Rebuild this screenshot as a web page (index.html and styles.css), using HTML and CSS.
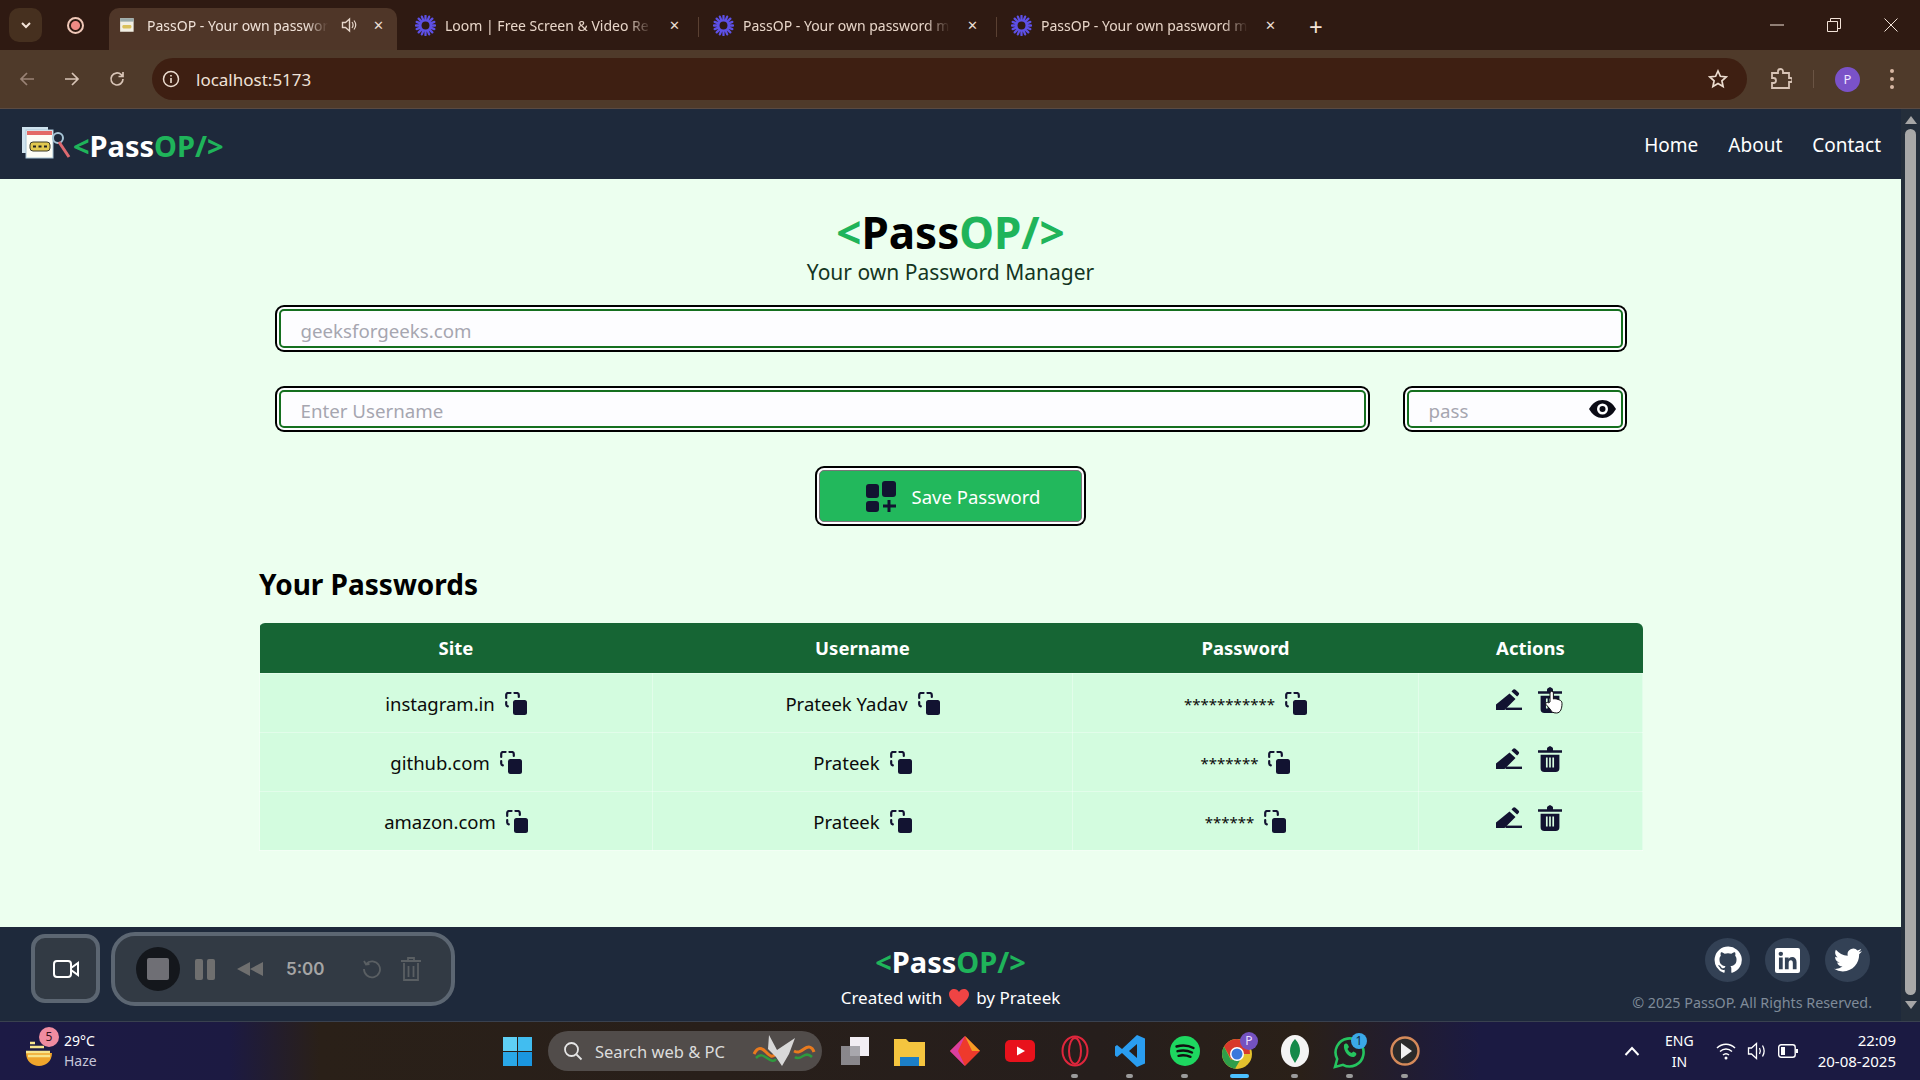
FILE: index.html
```html
<!DOCTYPE html>
<html lang="en">
<head>
    <meta charset="UTF-8">
    <title>PassOP - Your own password manager</title>
    <link rel="stylesheet" href="styles.css">
</head>
<body>
    <svg class="defs" width="0" height="0">
        <symbol id="i-spark" viewBox="0 0 24 24">
            <g stroke="#5d50e6" stroke-width="2.6" stroke-linecap="round">
                <path d="M12 1v22M1 12h22M4.2 4.2l15.6 15.6M19.8 4.2L4.2 19.8M7.8 1.9l8.4 20.2M16.2 1.9L7.8 22.1M1.9 7.8l20.2 8.4M22.1 7.8L1.9 16.2"/>
            </g>
            <circle cx="12" cy="12" r="4.5" fill="#2f1a12"/>
        </symbol>
        <symbol id="i-copy" viewBox="0 0 22 23">
            <rect x="8" y="8" width="14" height="15" rx="2.5" fill="#121331"/>
            <path d="M1.2 6V3a2 2 0 0 1 2-2h2.3M9.5 1h2.3a2 2 0 0 1 2 2v2M1.2 10v2.5a2 2 0 0 0 1.6 1.9" fill="none" stroke="#121331" stroke-width="2.2" stroke-linecap="round"/>
        </symbol>
        <symbol id="i-edit" viewBox="0 0 26 21">
            <path d="M13.500 4.500l6 5.500L8.500 21H0v-5.500zM15.500 2.500l1.500-1.700a1.800 1.800 0 0 1 2.500-.1l3 2.700a1.800 1.800 0 0 1 .1 2.500l-1.500 1.700z" fill="#121331"/>
            <rect x="9.500" y="18.600" width="16.500" height="2.400" fill="#121331"/>
        </symbol>
        <symbol id="i-trash" viewBox="0 0 24 26">
            <path d="M0 4.2h24v2.600H0zM9 4.200V2.600C9 1.600 10 1 12 0c2 1 3 1.600 3 2.600v1.600z" fill="#121331"/>
            <path d="M2.600 8.800h18.800v13.400a3.800 3.800 0 0 1-3.800 3.800H6.400a3.800 3.800 0 0 1-3.800-3.800z" fill="#121331"/>
            <path d="M8.800 11.500v10M12 11.500v10M15.200 11.500v10" stroke="#d6fbdf" stroke-width="1.700"/>
        </symbol>
    </svg>

    <div class="tabstrip">
        <div class="tab-menu">
            <svg width="14" height="14" viewBox="0 0 14 14"><path d="M3 5l4 4 4-4" fill="none" stroke="#f3e3d8" stroke-width="2"/></svg>
        </div>
        <div class="rec-dot"></div>
        <div class="tab tab-active">
            <svg class="tab-icon" viewBox="0 0 16 16"><rect x="1" y="2" width="12" height="12" fill="#f2efe4"/><rect x="1" y="2" width="12" height="3" fill="#9aa"/><rect x="3" y="8" width="8" height="3" rx="1" fill="#d9c05c"/></svg>
            <span class="tab-title">PassOP - Your own passwor</span>
            <svg class="tab-sound" width="16" height="16" viewBox="0 0 16 16"><path d="M1.500 5.500h3l4-3.500v12l-4-3.500h-3z" fill="none" stroke="#e6d6ca" stroke-width="1.400"/><path d="M11 5c1.300 1.800 1.300 4.200 0 6M13 3.500c2 2.600 2 6.400 0 9" fill="none" stroke="#e6d6ca" stroke-width="1.200"/></svg>
            <span class="tab-close">✕</span>
        </div>
        <div class="tab">
            <svg class="tab-icon spark"><use href="#i-spark"/></svg>
            <span class="tab-title">Loom | Free Screen &amp; Video Re</span>
            <span class="tab-close">✕</span>
        </div>
        <div class="tab tab-sep">
            <svg class="tab-icon spark"><use href="#i-spark"/></svg>
            <span class="tab-title">PassOP - Your own password m</span>
            <span class="tab-close">✕</span>
        </div>
        <div class="tab tab-sep">
            <svg class="tab-icon spark"><use href="#i-spark"/></svg>
            <span class="tab-title">PassOP - Your own password m</span>
            <span class="tab-close">✕</span>
        </div>
        <div class="tab-new">+</div>
        <div class="win-controls">
            <svg width="14" height="14" viewBox="0 0 14 14"><path d="M0 7h14" stroke="#f3e3d8"/></svg>
            <svg width="14" height="14" viewBox="0 0 14 14"><path d="M.5 3.500h10v10H.500zM3.500 3.500V.5h10v10h-3" fill="none" stroke="#f3e3d8"/></svg>
            <svg width="14" height="14" viewBox="0 0 14 14"><path d="M.5.5l13 13M13.500.5l-13 13" stroke="#f3e3d8"/></svg>
        </div>
    </div>

    <div class="toolbar">
        <svg class="tool-btn" width="18" height="18" viewBox="0 0 18 18"><path d="M16 9H3M9 3L3 9l6 6" fill="none" stroke="#9a8376" stroke-width="1.700"/></svg>
        <svg class="tool-btn" width="18" height="18" viewBox="0 0 18 18"><path d="M2 9h13M9 3l6 6-6 6" fill="none" stroke="#d8c4b6" stroke-width="1.700"/></svg>
        <svg class="tool-btn" width="18" height="18" viewBox="0 0 18 18"><path d="M15 9a6 6 0 1 1-1.800-4.300L15 6.500M15 2v4.500h-4.500" fill="none" stroke="#d8c4b6" stroke-width="1.700"/></svg>
        <div class="addressbar">
            <svg width="18" height="18" viewBox="0 0 18 18"><circle cx="9" cy="9" r="7.500" fill="none" stroke="#ecdccf" stroke-width="1.500"/><path d="M9 8v5M9 5v1.500" stroke="#ecdccf" stroke-width="1.600"/></svg>
            <span class="url">localhost:5173</span>
            <svg class="star" width="20" height="20" viewBox="0 0 20 20"><path d="M10 2l2.400 5.300 5.800.6-4.300 3.900 1.200 5.700-5.100-2.900-5.100 2.900 1.200-5.700L1.800 7.900l5.800-.6z" fill="none" stroke="#ecdccf" stroke-width="1.700"/></svg>
        </div>
        <svg class="puzzle" width="22" height="22" viewBox="0 0 22 22"><path d="M2 5h6V3.500a2.500 2.500 0 0 1 5 0V5h6v5h1.500a2 2 0 0 1 0 4H19v6H2v-5h1.500a2.500 2.500 0 0 0 0-5H2z" fill="none" stroke="#d8c4b6" stroke-width="1.800"/></svg>
        <span class="tool-sep"></span>
        <div class="avatar">P</div>
        <div class="kebab"><i></i><i></i><i></i></div>
    </div>

    <div class="viewport">
        <div class="page">
            <nav class="navbar">
                <div class="nav-brand">
                    <svg class="nav-icon" width="50" height="32" viewBox="0 0 50 32">
                        <rect x="0" y="0" width="26" height="26" fill="#cfe2ee"/>
                        <rect x="4" y="3" width="27" height="28" fill="#fdfdf6" stroke="#a7c4d6"/>
                        <rect x="5" y="4" width="25" height="4" fill="#e36a66"/>
                        <rect x="8" y="15" width="20" height="9" rx="3" fill="#e2c84f" stroke="#3a3a2a"/>
                        <path d="M11 19.500h3M16.500 19.500h3M22 19.500h3" stroke="#222" stroke-width="2"/>
                        <circle cx="36" cy="11" r="5" fill="none" stroke="#a7c4d6" stroke-width="2"/>
                        <path d="M37 15l10 15" stroke="#dd6a70" stroke-width="3"/>
                    </svg>
                    <div class="logo logo-light"><span class="logo-green">&lt;</span>Pass<span class="logo-green">OP/&gt;</span></div>
                </div>
                <ul class="nav-links">
                    <li>Home</li>
                    <li>About</li>
                    <li>Contact</li>
                </ul>
            </nav>

            <main class="content">
                <h1 class="hero-title logo"><span class="logo-green">&lt;</span>Pass<span class="logo-green">OP/&gt;</span></h1>
                <p class="hero-sub">Your own Password Manager</p>

                <div class="form">
                    <input class="field" type="text" placeholder="geeksforgeeks.com">
                    <div class="form-row">
                        <input class="field field-user" type="text" placeholder="Enter Username">
                        <div class="pass-wrap">
                            <input class="field field-pass" type="text" placeholder="pass">
                            <svg class="eye" width="27" height="18" viewBox="0 0 27 18">
                                <path d="M0 9C3.500 3 8 0 13.500 0S23.500 3 27 9c-3.500 6-8 9-13.500 9S3.500 15 0 9z" fill="#0a0a14"/>
                                <circle cx="13.500" cy="9" r="5.500" fill="#fff"/>
                                <circle cx="13.500" cy="9" r="3" fill="#0a0a14"/>
                            </svg>
                        </div>
                    </div>
                    <button class="save-btn">
                        <svg width="31" height="31" viewBox="0 0 31 31">
                            <rect x="0" y="3" width="13" height="14" rx="3" fill="#121331"/>
                            <rect x="16" y="0" width="14" height="16" rx="3" fill="#121331"/>
                            <rect x="0" y="20" width="13" height="11" rx="3" fill="#121331"/>
                            <path d="M23 19v12M17 25h13" stroke="#121331" stroke-width="3"/>
                        </svg>
                        Save Password
                    </button>
                </div>

                <div class="passwords">
                    <h2 class="passwords-title">Your Passwords</h2>
                    <table class="pw-table">
                        <colgroup>
                            <col class="col-site"><col class="col-user"><col class="col-pass"><col class="col-actions">
                        </colgroup>
                        <thead>
                            <tr><th>Site</th><th>Username</th><th>Password</th><th>Actions</th></tr>
                        </thead>
                        <tbody>
                            <tr>
                                <td><div class="cell">instagram.in <svg class="copy"><use href="#i-copy"/></svg></div></td>
                                <td><div class="cell">Prateek Yadav <svg class="copy"><use href="#i-copy"/></svg></div></td>
                                <td><div class="cell cell-stars">*********** <svg class="copy"><use href="#i-copy"/></svg></div></td>
                                <td>
                                    <div class="cell-actions">
                                        <svg class="edit"><use href="#i-edit"/></svg>
                                        <svg class="trash"><use href="#i-trash"/></svg>
                                        <svg class="hand" width="19" height="24" viewBox="0 0 19 24">
                                            <path d="M5 12V3a1.700 1.700 0 0 1 3.400 0v6l1.500-.3 1.600.3 1.500.4 1.500.6c1.500.5 2.500 1.500 2.500 3.500 0 5-1.500 9.500-5.500 9.500-3.500 0-5-1-6.500-4L1 14.500c-.8-1.500 1-3 2.300-1.700z" fill="#fff" stroke="#111" stroke-width="1"/>
                                        </svg>
                                    </div>
                                </td>
                            </tr>
                            <tr>
                                <td><div class="cell">github.com <svg class="copy"><use href="#i-copy"/></svg></div></td>
                                <td><div class="cell">Prateek <svg class="copy"><use href="#i-copy"/></svg></div></td>
                                <td><div class="cell cell-stars">******* <svg class="copy"><use href="#i-copy"/></svg></div></td>
                                <td>
                                    <div class="cell-actions">
                                        <svg class="edit"><use href="#i-edit"/></svg>
                                        <svg class="trash"><use href="#i-trash"/></svg>
                                    </div>
                                </td>
                            </tr>
                            <tr>
                                <td><div class="cell">amazon.com <svg class="copy"><use href="#i-copy"/></svg></div></td>
                                <td><div class="cell">Prateek <svg class="copy"><use href="#i-copy"/></svg></div></td>
                                <td><div class="cell cell-stars">****** <svg class="copy"><use href="#i-copy"/></svg></div></td>
                                <td>
                                    <div class="cell-actions">
                                        <svg class="edit"><use href="#i-edit"/></svg>
                                        <svg class="trash"><use href="#i-trash"/></svg>
                                    </div>
                                </td>
                            </tr>
                        </tbody>
                    </table>
                </div>
            </main>

            <footer class="footer">
                <div></div>
                <div class="footer-center">
                    <div class="logo logo-light"><span class="logo-green">&lt;</span>Pass<span class="logo-green">OP/&gt;</span></div>
                    <div class="created">Created with
                        <svg width="20" height="18" viewBox="0 0 20 18"><path d="M10 18C4 13 0 9.500 0 5.300 0 2 2.500 0 5.200 0 7.200 0 9 1 10 3c1-2 2.800-3 4.800-3C17.500 0 20 2 20 5.300 20 9.500 16 13 10 18z" fill="#ef4444"/></svg>
                        by Prateek</div>
                </div>
                <div class="footer-right">
                    <div class="socials">
                        <div class="social">
                            <svg width="28" height="28" viewBox="0 0 24 24"><path fill="#fff" d="M12 .5a11.500 11.500 0 0 0-3.640 22.410c.57.1.79-.25.79-.55v-2.030c-3.200.7-3.880-1.370-3.880-1.370-.52-1.330-1.280-1.690-1.280-1.690-1.050-.71.080-.7.080-.7 1.160.08 1.770 1.190 1.770 1.190 1.030 1.760 2.700 1.250 3.360.96.100-.75.400-1.250.73-1.540-2.550-.29-5.240-1.280-5.240-5.680 0-1.250.45-2.280 1.180-3.080-.12-.29-.51-1.460.11-3.040 0 0 .96-.31 3.150 1.180a10.900 10.900 0 0 1 5.740 0c2.190-1.490 3.150-1.180 3.150-1.180.62 1.580.23 2.750.11 3.040.73.8 1.180 1.830 1.180 3.080 0 4.410-2.690 5.380-5.250 5.670.41.360.78 1.060.78 2.130v3.160c0 .3.210.66.790.55A11.500 11.500 0 0 0 12 .5z"/></svg>
                        </div>
                        <div class="social">
                            <svg width="25" height="25" viewBox="0 0 24 24"><path fill="#fff" d="M2 0h20a2 2 0 0 1 2 2v20a2 2 0 0 1-2 2H2a2 2 0 0 1-2-2V2a2 2 0 0 1 2-2zm1.800 9v11.500h3.600V9zm1.800-5.500a2.100 2.100 0 1 0 0 4.200 2.100 2.100 0 0 0 0-4.200zM9.500 9v11.500h3.600v-6c0-1.600.6-2.800 2.100-2.800s1.900 1.100 1.900 2.800v6h3.600v-6.800c0-3.100-1.600-5-4.300-5-1.600 0-2.700.8-3.300 1.800V9z"/></svg>
                        </div>
                        <div class="social">
                            <svg width="28" height="28" viewBox="0 0 24 24"><path fill="#fff" d="M23.950 4.570a10 10 0 0 1-2.820.77 4.960 4.960 0 0 0 2.160-2.720c-.95.550-2 .96-3.130 1.180a4.920 4.920 0 0 0-8.380 4.480C7.690 8.100 4.070 6.130 1.640 3.160a4.820 4.820 0 0 0-.66 2.470c0 1.710.87 3.210 2.190 4.100a4.900 4.900 0 0 1-2.230-.62v.060a4.920 4.920 0 0 0 3.950 4.830 5 5 0 0 1-2.210.08 4.940 4.940 0 0 0 4.610 3.420A9.870 9.870 0 0 1 0 19.540a14 14 0 0 0 7.560 2.210c9.050 0 14-7.500 14-13.980 0-.21 0-.42-.015-.63a9.940 9.940 0 0 0 2.460-2.550z"/></svg>
                        </div>
                    </div>
                    <p class="copyright">© 2025 PassOP. All Rights Reserved.</p>
                </div>
            </footer>

            <!-- loom recorder controls sit over the footer -->
            <div class="loom-cam">
                <svg width="26" height="18" viewBox="0 0 26 18"><rect x="1" y="1" width="17" height="16" rx="3" fill="none" stroke="#fff" stroke-width="2"/><path d="M18 8l7-5v12l-7-5z" fill="none" stroke="#fff" stroke-width="2"/></svg>
            </div>
            <div class="loom-bar">
                <div class="loom-stop"><i></i></div>
                <div class="loom-pause"><i></i><i></i></div>
                <svg width="26" height="14" viewBox="0 0 26 14"><path d="M13 0v14L0 7zM26 0v14L13 7z" fill="#6f6f6f"/></svg>
                <span class="loom-time">5:00</span>
                <svg class="loom-restart" width="20" height="20" viewBox="0 0 20 20"><path d="M4 5a8 8 0 1 1-2 5M2 2l2 3.500 3.500-.5" fill="none" stroke="#5a5f63" stroke-width="1.800"/></svg>
                <svg width="20" height="24" viewBox="0 0 20 24"><path d="M0 4h20M7 4V1h6v3M3 6v17h14V6M7.500 9v11M12.500 9v11" fill="none" stroke="#5a5f63" stroke-width="1.800"/></svg>
            </div>
        </div>

        <div class="scrollbar">
            <span class="arrow-up"></span>
            <span class="thumb"></span>
            <span class="arrow-down"></span>
        </div>
    </div>

    <div class="taskbar">
        <div class="weather">
            <svg width="36" height="36" viewBox="0 0 36 36">
                <path d="M3 20h26c0 8-6 13-13 13S3 28 3 20z" fill="#f0a62c"/>
                <path d="M7 10h5M7 14h14M3 19h24M5 23h22" stroke="#f7e58c" stroke-width="2.500"/>
            </svg>
            <span class="weather-badge">5</span>
            <div class="weather-text"><b>29°C</b><span>Haze</span></div>
        </div>

        <div class="task-center">
            <svg class="task-start" width="29" height="29" viewBox="0 0 29 29">
                <rect width="14" height="14" fill="#5fd0f5"/><rect x="15" width="14" height="14" fill="#41bdf0"/>
                <rect y="15" width="14" height="14" fill="#2aa8e8"/><rect x="15" y="15" width="14" height="14" fill="#1a96e0"/>
            </svg>
            <div class="search-pill">
                <svg width="20" height="20" viewBox="0 0 20 20"><circle cx="8.500" cy="8.500" r="6.500" fill="none" stroke="#e6e6e6" stroke-width="1.800"/><path d="M13.500 13.500l5 5" stroke="#e6e6e6" stroke-width="1.800"/></svg>
                <span>Search web &amp; PC</span>
                <svg class="search-bird" width="64" height="34" viewBox="0 0 64 34">
                    <path d="M2 20c4-8 8-6 12-2s6 6 10 2M62 18c-2-6-6-6-10-3s-6 4-10 2" fill="none" stroke="#e87a1e" stroke-width="3"/>
                    <path d="M4 24c4-4 7-3 11 0s7 4 9 1M60 23c-3-3-6-3-9-1s-6 3-8 1" fill="none" stroke="#2e9a3e" stroke-width="2.500"/>
                    <path d="M17 1l8 15 18-12-6 16-7 12-6-9-8-8z" fill="#d8d8d8"/>
                </svg>
            </div>
            <div class="task-apps">
                <div class="task-app"><svg width="30" height="30" viewBox="0 0 30 30"><rect x="10" y="1" width="19" height="19" fill="#f2eef4"/><rect x="1" y="10" width="19" height="19" fill="#9b9aa0" opacity=".85"/></svg></div>
                <div class="task-app"><svg width="31" height="29" viewBox="0 0 31 29"><path d="M0 2h12l3 3h16v24H0z" fill="#f5c53f"/><rect x="6" y="20" width="19" height="9" fill="#1c7fc7"/></svg></div>
                <div class="task-app"><svg width="30" height="30" viewBox="0 0 30 30"><path d="M15 0l15 15-15 15L0 15z" fill="#ee3a2c"/><path d="M15 0L0 15l15 15L8 15z" fill="#d93ea0"/><path d="M15 0l15 15-8 0z" fill="#f59c23"/></svg></div>
                <div class="task-app"><svg width="30" height="22" viewBox="0 0 30 22"><rect width="30" height="22" rx="5" fill="#e8121c"/><path d="M12 6.500l8 4.500-8 4.500z" fill="#fff"/></svg></div>
                <div class="task-app task-run"><svg width="28" height="32" viewBox="0 0 28 32"><ellipse cx="14" cy="16" rx="12.500" ry="14.500" fill="none" stroke="#e0263c" stroke-width="2"/><ellipse cx="14" cy="16" rx="6" ry="13" fill="none" stroke="#e0263c" stroke-width="2"/></svg></div>
                <div class="task-app task-run"><svg width="30" height="32" viewBox="0 0 30 32"><path d="M22 0l8 3.500v25L22 32 7 18l-5 4-2-1.500V11.500L2 10l5 4zM22 9l-8 7 8 7z" fill="#2a9df0"/></svg></div>
                <div class="task-app task-run"><svg width="30" height="30" viewBox="0 0 30 30"><circle cx="15" cy="15" r="15" fill="#1ed760"/><path d="M6.500 10.500c6-1.700 12-1.200 17 1.500M7.500 15.200c5-1.300 10-.9 14.500 1.300M8.500 19.800c4-1 8-.7 12 1" fill="none" stroke="#111" stroke-width="2.400" stroke-linecap="round"/></svg></div>
                <div class="task-app task-run task-on">
                    <svg width="36" height="38" viewBox="0 0 36 38">
                        <circle cx="15" cy="22" r="15" fill="#e4c22d"/>
                        <path d="M15 7a15 15 0 0 0-13 7.500L9.500 28 15 22h13a15 15 0 0 0-13-15z" fill="#d8392c"/>
                        <path d="M2 14.500A15 15 0 0 0 13 36.800L20 25l-11 3z" fill="#2e9e4a"/>
                        <circle cx="15" cy="22" r="7" fill="#fff"/><circle cx="15" cy="22" r="5.500" fill="#3a78dc"/>
                        <circle cx="27" cy="9" r="9" fill="#7452c0"/>
                        <text x="27" y="13" text-anchor="middle" class="chrome-p">P</text>
                    </svg>
                </div>
                <div class="task-app task-run"><svg width="28" height="32" viewBox="0 0 28 32"><ellipse cx="14" cy="16" rx="14" ry="16" fill="#f4f4f4"/><path d="M14 4c4 4 5 8 5 12s-2 7-5 12c-3-5-5-8-5-12s1-8 5-12z" fill="#158a4a"/></svg></div>
                <div class="task-app task-run">
                    <svg width="36" height="36" viewBox="0 0 36 36">
                        <path d="M3 34l2.200-8A14 14 0 1 1 11 31.800z" fill="none" stroke="#25c45f" stroke-width="2.600"/>
                        <path d="M12 12c1-2 3-2 4 0l1 2-1.500 2c1 2 2 3 4 4l2-1.500 2.500 1.500c1 1 0 3-2 4-5 1-11-6-10-12z" fill="#25c45f"/>
                        <circle cx="27" cy="8" r="8" fill="#3ba9e8"/>
                        <text x="27" y="12" text-anchor="middle" class="badge-1">1</text>
                    </svg>
                </div>
                <div class="task-app task-run"><svg width="30" height="30" viewBox="0 0 30 30"><circle cx="15" cy="15" r="13.500" fill="#2a2a2a" stroke="#d58a5a" stroke-width="2.400"/><path d="M11 7l11 8-11 8z" fill="#efefef"/></svg></div>
            </div>
        </div>

        <div class="tray">
            <svg class="tray-chevron" width="16" height="10" viewBox="0 0 16 10"><path d="M1.500 9L8 2l6.500 7" fill="none" stroke="#fff" stroke-width="2"/></svg>
            <div class="tray-lang"><span>ENG</span><span>IN</span></div>
            <div class="tray-icons">
                <svg width="20" height="20" viewBox="0 0 20 20"><path d="M1 7c5-5 13-5 18 0M4 10.500c3.500-3.300 8.500-3.300 12 0M7 14c1.700-1.500 4.300-1.500 6 0" fill="none" stroke="#fff" stroke-width="1.500"/><circle cx="10" cy="17" r="1.500" fill="#fff"/></svg>
                <svg width="20" height="20" viewBox="0 0 20 20"><path d="M1.500 7h3l5-4.500v15L4.500 13h-3z" fill="none" stroke="#fff" stroke-width="1.300"/><path d="M12.500 7c1 1.800 1 4.200 0 6M15.500 4.500c2 3.300 2 7.700 0 11" fill="none" stroke="#fff" stroke-width="1.300"/></svg>
                <svg width="20" height="14" viewBox="0 0 20 14"><rect x=".7" y=".7" width="16.500" height="12.600" rx="2.500" fill="none" stroke="#fff" stroke-width="1.400"/><rect x="3" y="3" width="4" height="8" fill="#fff"/><rect x="18" y="5" width="2" height="4" fill="#fff"/></svg>
            </div>
            <div class="tray-clock"><span>22:09</span><span>20-08-2025</span></div>
        </div>
    </div>
</body>
</html>
```

FILE: styles.css
```css
* {
    box-sizing: border-box;
}

body {
    margin: 0;
    width: 1920px;
    height: 1080px;
    overflow: hidden;
    display: flex;
    flex-direction: column;
    font-family: "Noto Sans", "Open Sans", sans-serif;
}

.defs {
    position: absolute;
}

/* browser chrome */
.tabstrip {
    height: 50px;
    background: #2f1a12;
    display: flex;
    align-items: flex-end;
    padding-left: 9px;
    color: #e8d6c9;
    font-size: 14px;
}

.tab-menu {
    width: 33px;
    height: 34px;
    margin-bottom: 8px;
    border-radius: 10px;
    background: #46301f;
    display: flex;
    align-items: center;
    justify-content: center;
}

.rec-dot {
    width: 17px;
    height: 17px;
    margin: 0 25px 16px 25px;
    border-radius: 50%;
    border: 2px solid #f0c8b8;
    background: radial-gradient(circle, #ee8a84 0 4px, #2f1a12 5px);
}

.tab {
    width: 298px;
    height: 42px;
    padding: 0 18px 8px 15px;
    display: flex;
    align-items: center;
    position: relative;
}

.tab-active {
    width: 288px;
    margin-right: 3px;
    padding: 0 13px 8px 10px;
    background: #4f3628;
    border-radius: 10px 10px 0 0;
    color: #f0e2d8;
}

.tab-sep::before {
    content: "";
    position: absolute;
    left: 0;
    top: 9px;
    height: 20px;
    border-left: 1px solid #5a4032;
}

.tab-icon {
    width: 18px;
    height: 18px;
    flex: none;
}

.tab-icon.spark {
    width: 21px;
    height: 21px;
}

.tab-title {
    margin-left: 9px;
    width: 207px;
    white-space: nowrap;
    overflow: hidden;
    flex: none;
    -webkit-mask-image: linear-gradient(90deg, #000 88%, transparent);
    mask-image: linear-gradient(90deg, #000 88%, transparent);
}

.tab-active .tab-title {
    margin-left: 10px;
    width: 181px;
}

.tab-sound {
    margin-left: 13px;
}

.tab-close {
    margin-left: auto;
    font-size: 13px;
    color: #eaddd3;
}

.tab-new {
    font-size: 24px;
    line-height: 38px;
    margin-left: 15px;
    height: 42px;
    color: #f3e3d8;
}

.win-controls {
    margin-left: auto;
    height: 50px;
    width: 155px;
    padding: 0 22px 0 5px;
    display: flex;
    align-items: center;
    justify-content: space-between;
}

.toolbar {
    height: 59px;
    background: #4f3a2a;
    border-bottom: 1px solid #5a4a42;
    display: flex;
    align-items: center;
    padding-left: 18px;
    flex: none;
}

.tool-btn {
    margin-right: 27px;
}

.addressbar {
    margin-left: -1px;
    width: 1595px;
    height: 42px;
    border-radius: 21px;
    background: #3e1f12;
    display: flex;
    align-items: center;
    padding: 0 19px 0 10px;
}

.url {
    margin-left: 16px;
    color: #f0e2d8;
    font-size: 17px;
}

.star {
    margin-left: auto;
}

.puzzle {
    margin-left: 23px;
}

.tool-sep {
    width: 1px;
    height: 18px;
    margin: 0 21px;
    background: #6a5444;
}

.avatar {
    width: 25px;
    height: 25px;
    border-radius: 50%;
    background: #7a52c8;
    color: #efe6ff;
    font-size: 13px;
    text-align: center;
    line-height: 25px;
}

.kebab {
    margin-left: 30px;
    display: flex;
    flex-direction: column;
    gap: 4px;
}

.kebab i {
    width: 4px;
    height: 4px;
    border-radius: 50%;
    background: #d8b8a4;
}

/* page */
.viewport {
    height: 912px;
    display: flex;
    flex: none;
}

.page {
    width: 1901px;
    display: flex;
    flex-direction: column;
    position: relative;
    background: #ecffef;
}

.scrollbar {
    width: 19px;
    background: #242e3b;
    display: flex;
    flex-direction: column;
    align-items: center;
    padding-top: 7px;
}

.arrow-up {
    border: 6px solid transparent;
    border-top: 0;
    border-bottom: 8px solid #a6a6a6;
}

.thumb {
    width: 11px;
    height: 866px;
    margin: 5px 0 6px;
    border-radius: 6px;
    background: #a8a8a8;
}

.arrow-down {
    border: 6px solid transparent;
    border-bottom: 0;
    border-top: 8px solid #a6a6a6;
}

.navbar {
    height: 70px;
    flex: none;
    background: #1e293b;
    color: #fff;
    display: flex;
    align-items: center;
    justify-content: space-between;
    padding: 2px 20px 0 22px;
}

.nav-brand {
    display: flex;
    align-items: center;
    margin-top: 2px;
}

.nav-icon {
    margin-top: -6px;
    margin-right: 1px;
}

.logo {
    font-weight: 700;
    font-size: 29px;
    line-height: 34px;
    color: #000;
}

.logo-light {
    color: #fff;
}

.logo-green {
    color: #1fb45a;
}

.nav-links {
    list-style: none;
    margin: 0;
    padding: 0;
    display: flex;
    gap: 30px;
    font-size: 19px;
}

.content {
    flex: 1;
    padding-top: 29px;
    display: flex;
    flex-direction: column;
    align-items: center;
}

.hero-title {
    margin: 0;
    font-size: 44px;
    line-height: 48px;
}

.hero-sub {
    margin: 2px 0 0;
    font-size: 21px;
    line-height: 28px;
    color: #14361f;
}

.form {
    width: 1344px;
    margin-top: 23px;
    display: flex;
    flex-direction: column;
    align-items: center;
    gap: 42px;
}

.form-row {
    width: 100%;
    height: 38px;
    display: flex;
    gap: 41px;
}

.field {
    width: 100%;
    height: 39px;
    padding: 3px 20px 0;
    border: 2px solid #15701f;
    border-radius: 5px;
    background: #fdfdff;
    box-shadow: 0 0 0 2px #fdfdff, 0 0 0 4px #000;
    font-family: inherit;
    font-size: 18.700px;
    outline: none;
}

.form-row .field {
    height: 38px;
}

.field::placeholder {
    color: #a6a6b0;
}

.field-user {
    flex: 1;
    width: auto;
}

.pass-wrap {
    width: 216px;
    position: relative;
}

.field-pass {
    padding-right: 50px;
}

.eye {
    position: absolute;
    right: 7px;
    top: 10px;
}

.save-btn {
    width: 263px;
    height: 52px;
    padding: 0 0 0 5px;
    border: 1px solid #777;
    border-radius: 5px;
    background: #22b85c;
    box-shadow: 0 0 0 2px #fdfdff, 0 0 0 4px #000;
    color: #fff;
    font-family: inherit;
    font-size: 18.500px;
    display: flex;
    align-items: center;
    justify-content: center;
    gap: 15px;
}

.passwords {
    width: 1383px;
    margin-top: 42px;
}

.passwords-title {
    margin: 0 0 19px;
    font-size: 28px;
    line-height: 40px;
    color: #000;
}

.pw-table {
    width: 100%;
    table-layout: fixed;
    border-collapse: collapse;
    border-radius: 6px 6px 0 0;
    overflow: hidden;
    font-size: 18.500px;
}

.col-site { width: 393px; }
.col-user { width: 420px; }
.col-pass { width: 346px; }
.col-actions { width: 224px; }

.pw-table th {
    height: 50px;
    padding: 0;
    background: #166534;
    color: #fff;
    font-size: 18.500px;
    font-weight: 700;
}

.pw-table td {
    height: 59px;
    padding: 2px 0 0;
    background: #d3fcdf;
    color: #0a0a0a;
    border: 1px solid rgba(255, 255, 255, 0.35);
}

.cell {
    display: flex;
    align-items: center;
    justify-content: center;
    gap: 10px;
}

.cell-stars {
    font-size: 15px;
}

.copy {
    width: 22px;
    height: 23px;
}

.cell-actions {
    display: flex;
    align-items: center;
    justify-content: center;
    gap: 16px;
    margin: -8px 3px 0 0;
    position: relative;
}

.edit {
    width: 26px;
    height: 21px;
}

.trash {
    width: 24px;
    height: 26px;
}

.hand {
    position: absolute;
    left: 126px;
    top: 3px;
}

.footer {
    height: 94px;
    flex: none;
    background: #1e293b;
    color: #fff;
    display: grid;
    grid-template-columns: minmax(0, 1fr) auto minmax(0, 1fr);
    padding-top: 11px;
}

.footer-center {
    display: flex;
    flex-direction: column;
    align-items: center;
    padding-top: 7px;
}

.created {
    margin-top: 7px;
    font-size: 17px;
    line-height: 24px;
    display: flex;
    align-items: center;
    gap: 7px;
}

.footer-right {
    display: flex;
    flex-direction: column;
    align-items: flex-end;
    padding-right: 29px;
}

.socials {
    display: flex;
    gap: 15px;
    margin-right: 2px;
}

.social {
    width: 45px;
    height: 44px;
    border-radius: 50%;
    background: #334155;
    display: flex;
    align-items: center;
    justify-content: center;
}

.copyright {
    margin: 11px 0 0;
    font-size: 14.300px;
    line-height: 20px;
    color: #7f8b99;
}

/* loom recorder */
.loom-cam {
    position: absolute;
    left: 31px;
    top: 825px;
    width: 69px;
    height: 69px;
    border: 4px solid #5c6672;
    border-radius: 14px;
    background: #323a44;
    display: flex;
    align-items: center;
    justify-content: center;
}

.loom-bar {
    position: absolute;
    left: 111px;
    top: 823px;
    width: 344px;
    height: 74px;
    border: 4px solid #5c6672;
    border-radius: 24px;
    background: #323a44;
    display: flex;
    align-items: center;
    padding-left: 21px;
}

.loom-stop {
    width: 44px;
    height: 44px;
    border-radius: 50%;
    background: #14171c;
    display: flex;
    align-items: center;
    justify-content: center;
}

.loom-stop i {
    width: 22px;
    height: 22px;
    border-radius: 2px;
    background: #6f6f75;
}

.loom-pause {
    display: flex;
    gap: 4px;
    margin: 0 22px 0 15px;
}

.loom-pause i {
    width: 8px;
    height: 21px;
    border-radius: 2px;
    background: #6f6f6f;
}

.loom-time {
    margin-left: 23px;
    width: 76px;
    font-family: Inter, sans-serif;
    font-size: 17px;
    font-weight: 600;
    color: #a5a5a5;
}

.loom-restart {
    margin-right: 19px;
}

/* taskbar */
.taskbar {
    height: 59px;
    flex: none;
    position: relative;
    border-top: 1px solid #39414f;
    background: linear-gradient(90deg, #1c1a45 0, #1c1a42 230px, #2a2018 320px, #261e1c 1100px, #2a2018 1300px, #1b1a42 1480px);
    color: #fff;
    display: flex;
    align-items: center;
    font-size: 14px;
}

.weather {
    margin-left: 23px;
    width: 480px;
    display: flex;
    align-items: center;
    position: relative;
}

.weather-badge {
    position: absolute;
    left: 16px;
    top: -4px;
    width: 20px;
    height: 20px;
    border-radius: 50%;
    background: #f08ca0;
    color: #33121c;
    font-size: 12px;
    text-align: center;
    line-height: 20px;
}

.weather-text {
    margin-left: 5px;
    display: flex;
    flex-direction: column;
    font-size: 14px;
    line-height: 20px;
}

.weather-text b {
    font-weight: 400;
}

.weather-text span {
    color: #c6c6d8;
}

.task-center {
    display: flex;
    align-items: center;
}

.search-pill {
    margin-left: 16px;
    width: 274px;
    height: 40px;
    border-radius: 20px;
    background: #514c4a;
    display: flex;
    align-items: center;
    padding-left: 15px;
    color: #dcdcdc;
    font-size: 16.500px;
    position: relative;
}

.search-pill span {
    margin-left: 12px;
}

.search-bird {
    position: absolute;
    right: 6px;
    top: 3px;
}

.task-apps {
    display: flex;
    margin-left: 5px;
}

.task-app {
    width: 55px;
    height: 58px;
    display: flex;
    align-items: center;
    justify-content: center;
    position: relative;
}

.task-run::after {
    content: "";
    position: absolute;
    bottom: 2px;
    width: 7px;
    height: 4px;
    border-radius: 2px;
    background: #9b9b9b;
}

.task-on::after {
    width: 19px;
    background: #4cc2ff;
}

.chrome-p {
    font-size: 12px;
    fill: #eadfff;
    font-family: "Noto Sans", sans-serif;
}

.badge-1 {
    font-size: 12px;
    fill: #10283a;
    font-family: "Noto Sans", sans-serif;
}

.tray {
    margin-left: auto;
    display: flex;
    align-items: center;
    padding-right: 24px;
}

.tray-chevron {
    margin-right: 25px;
}

.tray-lang {
    display: flex;
    flex-direction: column;
    line-height: 21px;
    text-align: center;
}

.tray-icons {
    margin-left: 22px;
    display: flex;
    align-items: center;
    gap: 11px;
}

.tray-clock {
    margin-left: 20px;
    display: flex;
    flex-direction: column;
    line-height: 21px;
    text-align: right;
    font-size: 15px;
}
```
